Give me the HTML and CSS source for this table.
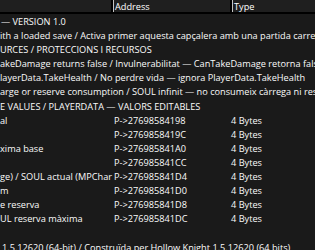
FILE: index.html
```html
<!DOCTYPE html>
<html>
<head>
<meta charset="utf-8">
<link rel="stylesheet" href="styles.css">
</head>
<body>
<div class="table">
  <div class="head">
    <div class="hc hc-desc"></div>
    <div class="hc hc-addr">Address</div>
    <div class="hc hc-type">Type</div>
  </div>
  <div class="rows">
    <div class="row group"><span class="desc ind1">— VERSION 1.0</span></div>
    <div class="row group"><span class="desc">ith a loaded save / Activa primer aquesta capçalera amb una partida carregada</span></div>
    <div class="row group"><span class="desc">URCES / PROTECCIONS I RECURSOS</span></div>
    <div class="row group"><span class="desc">akeDamage returns false / Invulnerabilitat — CanTakeDamage retorna false</span></div>
    <div class="row group"><span class="desc">layerData.TakeHealth / No perdre vida — ignora PlayerData.TakeHealth</span></div>
    <div class="row group"><span class="desc">arge or reserve consumption / SOUL infinit — no consumeix càrrega ni reserva</span></div>
    <div class="row group"><span class="desc">E VALUES / PLAYERDATA — VALORS EDITABLES</span></div>
    <div class="row"><span class="desc">al</span><span class="addr">P-&gt;27698584198</span><span class="type">4 Bytes</span></div>
    <div class="row"><span class="desc"></span><span class="addr">P-&gt;2769858419C</span><span class="type">4 Bytes</span></div>
    <div class="row"><span class="desc">xima base</span><span class="addr">P-&gt;276985841A0</span><span class="type">4 Bytes</span></div>
    <div class="row"><span class="desc"></span><span class="addr">P-&gt;276985841CC</span><span class="type">4 Bytes</span></div>
    <div class="row"><span class="desc">ge) / SOUL actual (MPChar</span><span class="addr">P-&gt;276985841D4</span><span class="type">4 Bytes</span></div>
    <div class="row"><span class="desc">m</span><span class="addr">P-&gt;276985841D0</span><span class="type">4 Bytes</span></div>
    <div class="row"><span class="desc">e reserva</span><span class="addr">P-&gt;276985841D8</span><span class="type">4 Bytes</span></div>
    <div class="row"><span class="desc">UL reserva màxima</span><span class="addr">P-&gt;276985841DC</span><span class="type">4 Bytes</span></div>
    <div class="row group"><span class="desc"></span></div>
    <div class="row group"><span class="desc ind2">1.5.12620 (64-bit) / Construïda per Hollow Knight 1.5.12620 (64 bits)</span></div>
  </div>
</div>
</body>
</html>
```

FILE: styles.css
```css
html, body {
  margin: 0;
  padding: 0;
  background: #1a1a1a;
  overflow: hidden;
}
body {
  width: 315px;
  height: 250px;
  font-family: "Open Sans", "Noto Sans", sans-serif;
  font-size: 9.2px;
  color: #fafafa;
}
.table {
  width: 315px;
  height: 250px;
  overflow: hidden;
}
.head {
  display: flex;
  height: 12px;
  background: #1f1f1f;
  border-bottom: 2px solid #000;
  line-height: 13px;
}
.hc {
  box-sizing: border-box;
  height: 12px;
  white-space: nowrap;
  color: #fff;
}
.hc-desc {
  width: 113px;
  border-right: 2px solid #000;
}
.hc-addr {
  width: 119px;
  border-left: 1px solid #c4c4c4;
  border-right: 2px solid #000;
  padding-left: 1px;
}
.hc-type {
  flex: 1;
  border-left: 1px solid #c4c4c4;
  padding-left: 1px;
}
.rows {
  padding-top: 1px;
  overflow: hidden;
}
.row {
  display: grid;
  grid-template-columns: 114px 117px 1fr;
  height: 14.1px;
  line-height: 14.1px;
  white-space: nowrap;
}
.row.group {
  display: block;
  overflow: hidden;
}
.desc {
  overflow: hidden;
  min-width: 0;
}
.row.group .desc {
  overflow: visible;
}
.ind1 {
  padding-left: 1px;
}
.ind2 {
  padding-left: 2px;
}
```
